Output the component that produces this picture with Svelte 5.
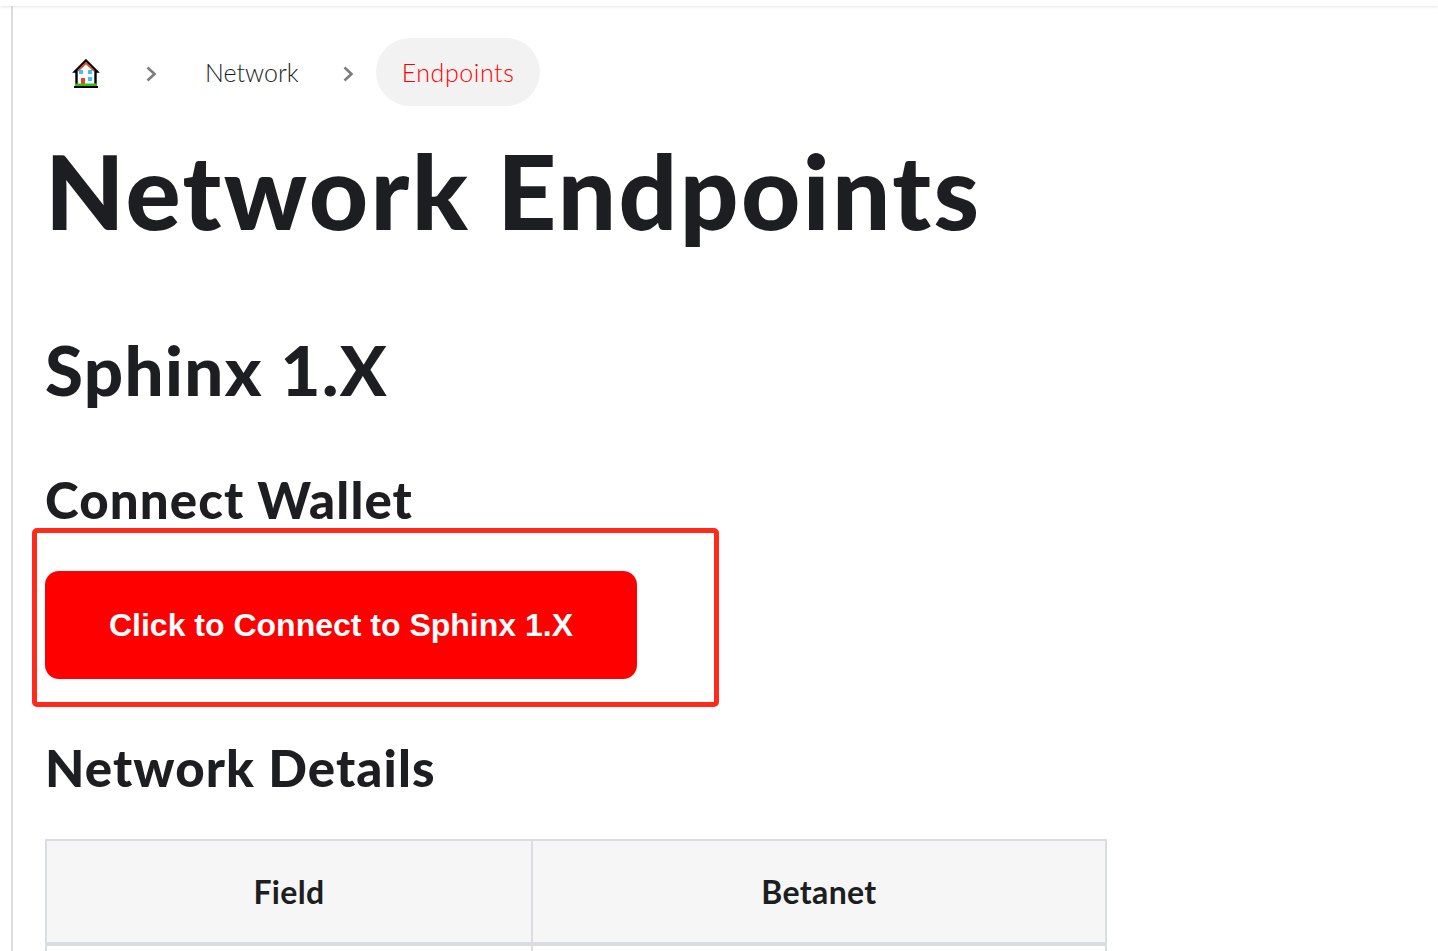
<svelte:options runes={true} />
<script>
  const columns = ['Field', 'Betanet'];
</script>

<div class="page">
  <div class="topbar"></div>
  <div class="layout">
    <div class="rail"></div>
    <main class="content">
      <nav class="crumbs">
        <a class="crumb home" href="#home" aria-label="Home">
          <svg width="28" height="30" viewBox="0 0 28 30">
            <path d="M14 2.5 L25 13.5 H23.5 V28 H4.5 V13.5 H3 Z" fill="#fff" stroke="#000" stroke-width="2.4"/>
            <path d="M6 13 L14 5.2 L22 13" fill="none" stroke="#f0401e" stroke-width="1.6"/>
            <rect x="7" y="12" width="4" height="4" fill="#38c6f4"/>
            <rect x="16" y="12" width="4" height="4" fill="#38c6f4"/>
            <rect x="16" y="19" width="4" height="4" fill="#38c6f4"/>
            <rect x="9" y="20" width="4" height="7" fill="#f0401e"/>
            <rect x="3" y="25.5" width="22" height="2.5" fill="#2fc21f"/>
            <rect x="2" y="28" width="24" height="2" fill="#000"/>
          </svg>
        </a>
        <svg class="chev" width="12" height="16" viewBox="0 0 12 16"><path d="M2.5 1.5 L9.5 8 L2.5 14.5" fill="none" stroke="#7d7d7d" stroke-width="2.6"/></svg>
        <a class="crumb" href="#network">Network</a>
        <svg class="chev" width="12" height="16" viewBox="0 0 12 16"><path d="M2.5 1.5 L9.5 8 L2.5 14.5" fill="none" stroke="#7d7d7d" stroke-width="2.6"/></svg>
        <span class="crumb active">Endpoints</span>
      </nav>

      <h1>Network Endpoints</h1>
      <h2>Sphinx 1.X</h2>
      <h3 class="wallet">Connect Wallet</h3>
      <div class="callout">
        <button type="button">Click to Connect to Sphinx 1.X</button>
      </div>
      <h3 class="details">Network Details</h3>

      <table>
        <thead>
          <tr>
            {#each columns as col}
              <th>{col}</th>
            {/each}
          </tr>
        </thead>
        <tbody>
          <tr>
            <td>&nbsp;</td>
            <td>&nbsp;</td>
          </tr>
        </tbody>
      </table>
    </main>
  </div>
</div>

<style>
  :global(body) {
    margin: 0;
    background: #fff;
    overflow: hidden;
  }
  .page {
    height: 951px;
    overflow: hidden;
    font-family: Lato, "Liberation Sans", sans-serif;
    color: #1c1e21;
  }
  .topbar {
    height: 6px;
    background: #fff;
    box-shadow: 0 1px 3px rgba(0, 0, 0, 0.1);
    position: relative;
  }
  .layout {
    display: flex;
  }
  .rail {
    width: 11px;
    height: 945px;
    border-right: 2px solid #dadde1;
    flex: none;
  }
  .content {
    flex: 1;
    padding-left: 32px;
    min-width: 0;
  }
  .crumbs {
    display: flex;
    align-items: center;
    height: 68px;
    margin-top: 32px;
  }
  .crumb {
    color: #1c1e21;
    text-decoration: none;
    font-size: 25px;
    font-weight: 300;
    display: flex;
    align-items: center;
    height: 68px;
    padding: 0 26px;
    border-radius: 34px;
  }
  .home {
    padding: 0 45px 0 27px;
  }
  .home svg {
    margin-top: 2px;
  }
  .chev {
    flex: none;
    margin-top: 3px;
  }
  .active {
    background: #f2f2f2;
    color: #ff0000;
    margin-left: 22px;
    letter-spacing: 0.55px;
  }
  .crumb:not(.home):not(.active) {
    margin-left: 22px;
    padding: 0 43px 0 26px;
  }
  h1 {
    margin: 24px 0 0 0;
    font-size: 103px;
    font-weight: 900;
    line-height: 121px;
    height: 121px;
    letter-spacing: 2.4px;
  }
  h2 {
    margin: 78px 0 0 0;
    font-size: 69px;
    font-weight: 900;
    line-height: 82px;
    letter-spacing: 1.35px;
  }
  h3 {
    margin: 0;
    font-size: 51px;
    font-weight: 900;
    line-height: 60px;
    letter-spacing: 1.1px;
  }
  .wallet {
    margin-top: 59px;
  }
  .callout {
    box-sizing: border-box;
    width: 687px;
    height: 179px;
    margin: -2px 0 0 -13px;
    padding: 38px 0 0 8px;
    border: 5px solid #ff2a1a;
    border-radius: 5px;
  }
  button {
    width: 592px;
    height: 108px;
    border: 0;
    border-radius: 14px;
    background: #ff0000;
    color: #fff;
    font-family: "Liberation Sans", Arial, sans-serif;
    font-size: 32px;
    font-weight: 700;
    padding: 0;
  }
  .details {
    margin: 31px 0 0 0;
  }
  table {
    border-collapse: collapse;
    margin-top: 41px;
    width: 1062px;
    table-layout: fixed;
  }
  th,
  td {
    border: 2px solid #dadde1;
    font-size: 32px;
  }
  th {
    height: 101px;
    padding: 0;
    background: #f6f6f6;
    font-weight: 700;
    letter-spacing: 0.35px;
    border-bottom-width: 4px;
  }
  th:first-child,
  td:first-child {
    width: 484px;
  }
  td {
    height: 80px;
  }
</style>
